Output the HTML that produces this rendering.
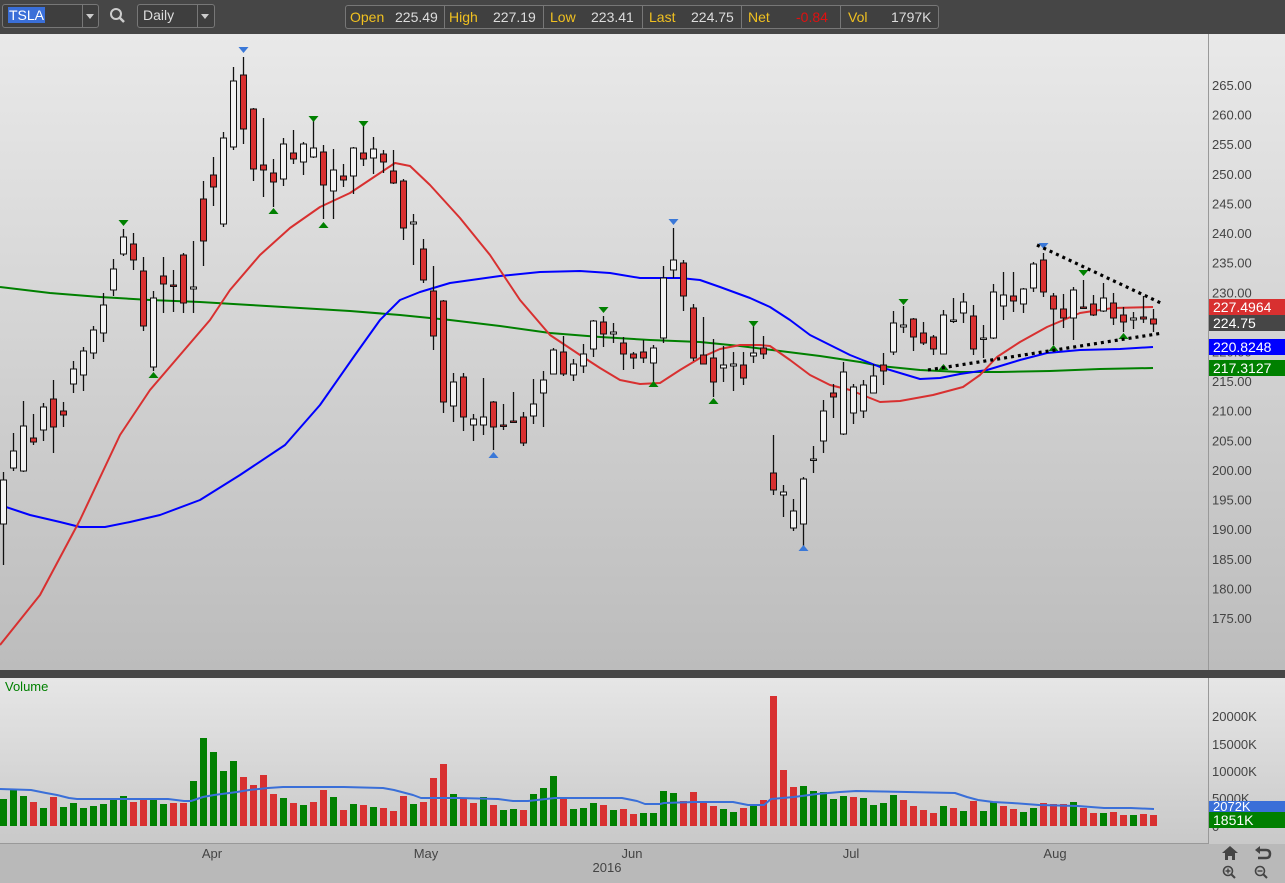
<!DOCTYPE html>
<html><head><meta charset="utf-8"><style>
html,body{margin:0;padding:0;width:1285px;height:883px;overflow:hidden;font-family:"Liberation Sans",sans-serif;}
#top{position:absolute;left:0;top:0;width:1285px;height:34px;background:#464646;}
.box{position:absolute;border:1px solid #777;border-radius:3px;background:#3e3e3e;}
.t{position:absolute;font-size:14px;line-height:16px;}
</style></head><body>
<svg id="c" width="1285" height="883" style="position:absolute;left:0;top:0" xmlns="http://www.w3.org/2000/svg">
<defs>
<linearGradient id="g1" x1="0" y1="0" x2="0" y2="1"><stop offset="0" stop-color="#e9e9e9"/><stop offset="1" stop-color="#bcbcbc"/></linearGradient>
<linearGradient id="g2" x1="0" y1="0" x2="0" y2="1"><stop offset="0" stop-color="#e6e6e6"/><stop offset="1" stop-color="#c2c2c2"/></linearGradient>
</defs>
<rect x="0" y="34" width="1285" height="636" fill="url(#g1)"/>
<rect x="0" y="670" width="1285" height="8" fill="#464646"/>
<rect x="0" y="678" width="1285" height="205" fill="url(#g2)"/>
<rect x="0" y="844" width="1285" height="39" fill="#b9b9b9"/>
<line x1="1208.5" y1="34" x2="1208.5" y2="670" stroke="#999"/>
<line x1="1208.5" y1="678" x2="1208.5" y2="844" stroke="#999"/>
<line x1="0" y1="843.5" x2="1209" y2="843.5" stroke="#999"/>
<g id="chart"></g>
</svg>
<div id="top">
 <div class="box" style="left:2px;top:4px;width:95px;height:22px;"></div>
 <div style="position:absolute;left:8px;top:7px;background:#3a6fd8;color:#fff;font-size:14px;line-height:16px;padding:0 1px">TSLA</div>
 <div style="position:absolute;left:82px;top:5px;width:1px;height:22px;background:#777"></div>
 <div style="position:absolute;left:86px;top:14px;border-left:4px solid transparent;border-right:4px solid transparent;border-top:5px solid #ccc"></div>
 <svg style="position:absolute;left:109px;top:7px" width="18" height="18"><circle cx="7" cy="7" r="5" fill="none" stroke="#ccc" stroke-width="2"/><line x1="10.5" y1="10.5" x2="15" y2="15" stroke="#ccc" stroke-width="2.5"/></svg>
 <div class="box" style="left:137px;top:4px;width:76px;height:22px;"></div>
 <div class="t" style="left:143px;top:7px;color:#ddd">Daily</div>
 <div style="position:absolute;left:197px;top:5px;width:1px;height:22px;background:#777"></div>
 <div style="position:absolute;left:201px;top:14px;border-left:4px solid transparent;border-right:4px solid transparent;border-top:5px solid #ccc"></div>
 <div class="box" style="left:345px;top:5px;width:592px;height:22px;background:#404040"></div>
 <div style="position:absolute;left:444px;top:6px;width:1px;height:22px;background:#777"></div>
 <div style="position:absolute;left:543px;top:6px;width:1px;height:22px;background:#777"></div>
 <div style="position:absolute;left:642px;top:6px;width:1px;height:22px;background:#777"></div>
 <div style="position:absolute;left:741px;top:6px;width:1px;height:22px;background:#777"></div>
 <div style="position:absolute;left:840px;top:6px;width:1px;height:22px;background:#777"></div>
 <div class="t" style="left:350px;top:9px;color:#f0c020">Open</div><div class="t" style="left:395px;top:9px;color:#ddd">225.49</div>
 <div class="t" style="left:449px;top:9px;color:#f0c020">High</div><div class="t" style="left:493px;top:9px;color:#ddd">227.19</div>
 <div class="t" style="left:550px;top:9px;color:#f0c020">Low</div><div class="t" style="left:591px;top:9px;color:#ddd">223.41</div>
 <div class="t" style="left:649px;top:9px;color:#f0c020">Last</div><div class="t" style="left:691px;top:9px;color:#ddd">224.75</div>
 <div class="t" style="left:748px;top:9px;color:#f0c020">Net</div><div class="t" style="left:796px;top:9px;color:#e01010">-0.84</div>
 <div class="t" style="left:848px;top:9px;color:#f0c020">Vol</div><div class="t" style="left:891px;top:9px;color:#ddd">1797K</div>
</div>
<script>
var g=document.getElementById('chart'),h='';
function py(p){return 85+(265-p)*5.922;}
for(var p=265;p>=175;p-=5){h+='<text x="1212" y="'+(py(p)+5)+'" font-size="13" fill="#444">'+p.toFixed(2)+'</text>';}
var C=[
[480,524,472,565,'W'],[451,468,433,471,'W'],[426,471,401,472,'W'],[438,442,414,445,'R'],[407,430,403,441,'W'],[399,427,380,453,'R'],[411,415,402,427,'R'],[369,384,361,393,'W'],[351,375,347,391,'W'],[330,353,326,359,'W'],
[305,333,293,342,'W'],[269,290,259,296,'W'],[237,254,229,256,'W'],[244,260,233,270,'R'],[271,326,257,331,'R'],[298,367,291,371,'W'],[276,284,257,313,'R'],[285,286,270,312,'R'],[255,303,253,313,'R'],[287,289,241,313,'W'],
[199,241,181,266,'R'],[175,187,157,206,'R'],[138,224,132,227,'W'],[81,147,67,150,'W'],[75,129,57,144,'R'],[109,169,108,181,'R'],[165,170,118,197,'R'],[173,182,159,207,'R'],[144,179,138,186,'W'],[153,159,130,164,'R'],
[144,162,142,175,'W'],[148,157,119,158,'W'],[152,185,145,219,'R'],[170,191,149,219,'W'],[176,180,164,187,'R'],[148,176,147,194,'W'],[153,159,122,166,'R'],[149,158,137,174,'W'],[154,162,150,173,'R'],[171,183,150,184,'R'],
[181,228,179,240,'R'],[222,224,214,265,'W'],[249,280,239,283,'R'],[291,336,266,350,'R'],[301,402,300,413,'R'],[382,406,373,422,'W'],[377,417,373,431,'R'],[419,425,414,441,'W'],[417,425,378,435,'W'],[402,427,401,450,'R'],
[425,426,404,430,'R'],[421,422,392,423,'R'],[417,443,412,446,'R'],[404,416,379,424,'W'],[380,393,371,427,'W'],[350,374,348,373,'W'],[352,374,336,376,'R'],[364,375,359,381,'W'],[354,366,344,373,'W'],[321,349,320,357,'W'],
[322,334,316,347,'R'],[332,334,323,343,'W'],[343,354,337,370,'R'],[354,358,352,369,'R'],[352,358,340,363,'R'],[348,363,345,385,'W'],[278,338,266,343,'W'],[260,270,228,278,'W'],[263,296,260,311,'R'],[308,358,304,361,'R'],
[355,364,317,364,'R'],[358,382,339,397,'R'],[365,368,346,382,'W'],[364,366,352,391,'W'],[365,378,352,385,'R'],[353,356,325,363,'W'],[348,354,336,359,'R'],[473,490,435,495,'R'],[492,495,485,517,'W'],[511,528,499,531,'W'],
[479,524,477,548,'W'],[459,460,446,473,'W'],[411,441,400,453,'W'],[393,397,384,418,'R'],[372,434,362,435,'W'],[387,413,384,424,'W'],[385,411,380,418,'W'],[376,393,364,393,'W'],[365,371,353,385,'R'],[323,352,311,355,'W'],
[325,327,306,333,'W'],[319,337,318,351,'R'],[333,343,322,345,'R'],[337,349,335,355,'R'],[315,354,310,354,'W'],[320,321,298,323,'W'],[302,313,293,323,'W'],[316,349,305,355,'R'],[338,339,325,358,'W'],[292,338,284,339,'W'],
[295,306,272,320,'W'],[296,301,272,312,'R'],[289,304,288,313,'W'],[264,288,262,292,'W'],[260,292,253,297,'R'],[296,309,293,345,'R'],[309,318,294,328,'R'],[290,318,287,340,'W'],[307,308,280,308,'R'],[304,315,295,316,'R'],
[298,311,283,312,'W'],[303,318,293,325,'R'],[315,322,307,332,'R'],[318,320,312,329,'W'],[317,319,296,323,'R'],[319,324,309,332,'R']];
function pl(pts,col,w){h+='<polyline points="'+pts+'" fill="none" stroke="'+col+'" stroke-width="'+w+'" stroke-linejoin="round"/>';}
pl("0,287 50,293 100,297 150,300 200,302 250,305 300,308 350,311 400,315 450,320 500,326 550,333 600,337 650,340 700,342 740,346 780,351 820,356 860,362 880,366 920,370 960,372 1000,372 1050,371 1100,369 1153,368","#008000",2);
pl("0,505 30,515 60,522 80,527 105,527 130,522 160,515 200,500 240,475 285,445 320,405 355,355 380,320 400,300 420,292 450,283 500,276 540,272 580,271 610,273 640,278 680,278 700,280 720,287 750,298 770,307 790,320 810,335 830,345 850,355 880,367 920,379 940,378 960,374 987,370 1020,360 1047,353 1080,350 1120,349 1153,347","#0000ff",2);
pl("0,645 40,595 80,520 120,435 150,390 180,355 210,320 230,290 260,255 290,228 320,207 350,193 380,173 395,163 410,166 430,185 460,218 490,255 520,300 550,335 580,355 600,368 620,380 640,384 660,383 680,370 700,358 720,349 740,345 760,345 770,346 790,360 810,375 830,385 850,390 880,402 900,401 933,395 963,387 980,375 997,357 1020,342 1047,327 1080,313 1113,308 1153,307","#d83030",2);
for(var i=0;i<C.length;i++){var c=C[i],x=3+10*i;
 h+='<line x1="'+(x+0.5)+'" y1="'+c[2]+'" x2="'+(x+0.5)+'" y2="'+c[3]+'" stroke="#111" stroke-width="1.3"/>';
 var bh=Math.max(c[1]-c[0],1.5);
 h+='<rect x="'+(x-2.5)+'" y="'+c[0]+'" width="6" height="'+bh+'" fill="'+(c[4]=='R'?'#d83030':'#f2f2f2')+'" stroke="#111" stroke-width="1"/>';}
function tri(x,y,dn,col){x+=0.5;h+= dn?'<polygon points="'+(x-5)+','+y+' '+(x+5)+','+y+' '+x+','+(y+6)+'" fill="'+col+'"/>':'<polygon points="'+(x-5)+','+y+' '+(x+5)+','+y+' '+x+','+(y-6)+'" fill="'+col+'"/>';}
var G='#008000',B='#3a78d8';
[[123,220],[313,116],[363,121],[603,307],[753,321],[903,299],[1083,270]].forEach(function(m){tri(m[0],m[1],1,G);});
[[243,47],[673,219],[1043,243]].forEach(function(m){tri(m[0],m[1],1,B);});
[[153,378],[273,214],[323,228],[653,387],[713,404],[943,370],[1053,351],[1123,339]].forEach(function(m){tri(m[0],m[1],0,G);});
[[493,458],[803,551]].forEach(function(m){tri(m[0],m[1],0,B);});
h+='<line x1="1037" y1="245" x2="1163" y2="304" stroke="#000" stroke-width="3.2" stroke-dasharray="3,4"/>';
h+='<line x1="928" y1="370" x2="1163" y2="333" stroke="#000" stroke-width="3.2" stroke-dasharray="3,4"/>';
function tag(y,col,txt){h+='<rect x="1209" y="'+y+'" width="76" height="16" fill="'+col+'"/><text x="1213" y="'+(y+13)+'" font-size="14" fill="#fff">'+txt+'</text>';}
tag(299,'#d83030','227.4964');tag(315,'#464646','224.75');tag(339,'#0000ff','220.8248');tag(360,'#008000','217.3127');
h+='<text x="5" y="691" font-size="13" fill="#008000">Volume</text>';
var vl=[["20000K",716],["15000K",744],["10000K",771],["5000K",798],["0",826]];
vl.forEach(function(v){h+='<text x="1212" y="'+(v[1]+5)+'" font-size="13" fill="#444">'+v[0]+'</text>';});
var V=[[799,'G'],[790,'G'],[796,'G'],[802,'R'],[808,'G'],[797,'R'],[807,'G'],[803,'G'],[808,'G'],[806,'G'],[804,'G'],[799,'G'],[796,'G'],[802,'R'],[798,'R'],[798,'G'],[804,'G'],[803,'R'],[803,'R'],[781,'G'],[738,'G'],[752,'G'],[771,'G'],[761,'G'],[777,'R'],[785,'R'],[775,'R'],[794,'R'],[798,'G'],[803,'R'],[805,'G'],[802,'R'],[790,'R'],[797,'G'],[810,'R'],[804,'G'],[805,'R'],[807,'G'],[808,'R'],[811,'R'],[796,'R'],[804,'G'],[802,'R'],[778,'R'],[764,'R'],[794,'G'],[799,'R'],[803,'R'],[797,'G'],[805,'R'],[810,'G'],[809,'G'],[810,'R'],[794,'G'],[788,'G'],[776,'G'],[798,'R'],[809,'G'],
[808,'G'],[803,'G'],[805,'R'],[810,'G'],[809,'R'],[814,'R'],[813,'G'],[813,'G'],[791,'G'],[793,'G'],[801,'R'],[792,'R'],[802,'R'],[806,'R'],[809,'G'],[812,'G'],[808,'R'],[806,'G'],[800,'R'],[696,'R'],[770,'R'],[787,'R'],[786,'G'],[791,'G'],[792,'G'],[799,'G'],[796,'G'],[797,'R'],[798,'G'],[805,'G'],[803,'G'],[795,'G'],[800,'R'],[806,'R'],[810,'R'],[813,'R'],[806,'G'],[808,'R'],[811,'G'],[801,'R'],[811,'G'],[802,'G'],[806,'R'],[809,'R'],[812,'G'],[808,'G'],[803,'R'],[804,'R'],[804,'R'],[802,'G'],[808,'R'],[813,'R'],[813,'G'],[812,'R'],[815,'R'],[815,'G'],[814,'R'],[815,'R']];
for(var i=0;i<V.length;i++){var x=3+10*i;h+='<rect x="'+(x-3)+'" y="'+V[i][0]+'" width="7" height="'+(826-V[i][0])+'" fill="'+(V[i][1]=='G'?'#008000':'#d83030')+'"/>';}
pl("0,789 31,790 46,793 57,795 69,798 77,799 168,799 184,801 191,801 203,797 214,795 237,792 249,790 268,788 283,787 344,787 383,788 394,790 413,795 421,798 444,798 459,798 498,799 513,801 528,801 555,798 622,798 637,801 645,804 660,804 664,803 695,802 733,802 748,805 764,805 771,799 794,797 817,794 840,792 856,791 955,793 967,797 978,800 993,802 1012,803 1039,805 1078,806 1104,808 1131,808 1154,809","#3a6fd8",2);
h+='<rect x="1209" y="801" width="76" height="11" fill="#3a6fd8"/><text x="1213" y="811" font-size="13" fill="#fff">2072K</text>';
h+='<rect x="1209" y="812" width="76" height="16" fill="#008000"/><text x="1213" y="825" font-size="14" fill="#fff">1851K</text>';
[["Apr",212],["May",426],["Jun",632],["Jul",851],["Aug",1055]].forEach(function(l){h+='<text x="'+l[1]+'" y="858" font-size="13" fill="#444" text-anchor="middle">'+l[0]+'</text>';});
h+='<text x="607" y="872" font-size="13" fill="#444" text-anchor="middle">2016</text>';
h+='<path d="M1222,853 L1230,846 L1238,853 L1235,853 L1235,860 L1232,860 L1232,856 L1228,856 L1228,860 L1225,860 L1225,853 Z" fill="#444"/>';
h+='<path d="M1257,850 L1266,850 Q1270,850 1270,854 Q1270,858 1266,858 L1258,858" fill="none" stroke="#444" stroke-width="2.5"/><polygon points="1255,850 1260,846 1260,854" fill="#444"/>';
h+='<circle cx="1228" cy="871" r="4.5" fill="none" stroke="#444" stroke-width="1.6"/><line x1="1231" y1="874" x2="1235" y2="878" stroke="#444" stroke-width="2"/><line x1="1225.5" y1="871" x2="1230.5" y2="871" stroke="#444" stroke-width="1.4"/><line x1="1228" y1="868.5" x2="1228" y2="873.5" stroke="#444" stroke-width="1.4"/>';
h+='<circle cx="1260" cy="871" r="4.5" fill="none" stroke="#444" stroke-width="1.6"/><line x1="1263" y1="874" x2="1267" y2="878" stroke="#444" stroke-width="2"/><line x1="1257.5" y1="871" x2="1262.5" y2="871" stroke="#444" stroke-width="1.4"/>';
g.innerHTML=h;
</script>
</body></html>
